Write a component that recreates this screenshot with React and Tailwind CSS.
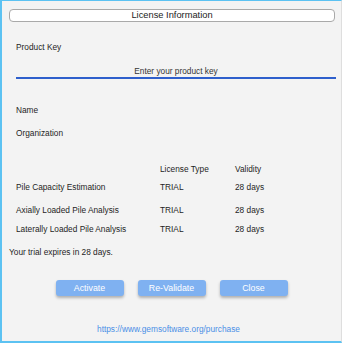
import React from 'react';

const rows = [
  ['Pile Capacity Estimation', 'TRIAL', '28 days', 'mt-[9px]'],
  ['Axially Loaded Pile Analysis', 'TRIAL', '28 days', 'mt-[14px]'],
  ['Laterally Loaded Pile Analysis', 'TRIAL', '28 days', 'mt-[10px]'],
];

const Btn = ({ children }) => (
  <button className="w-[68px] h-[16px] rounded-[3px] bg-[#7fb1f1] text-white text-[8.8px] leading-none shadow-[0_2px_3px_rgba(0,0,0,0.28)]">
    {children}
  </button>
);

const Row = ({ a, b, c, className = '' }) => (
  <div className={`ml-[14px] flex ${className}`}>
    <div className="w-[144px]">{a}</div>
    <div className="w-[75px]">{b}</div>
    <div>{c}</div>
  </div>
);

export default function App() {
  return (
    <div
      className="w-[342px] h-[343px] bg-[#f3f3f3] text-[#1e1e1e] text-[8.3px] leading-[9px] border-l-2 border-t border-b-2 border-r border-l-[#5cc2f2] border-t-[#5cc2f2] border-b-[#5cc2f2] border-r-[#dedede] flex flex-col"
      style={{ fontFamily: '"Liberation Sans", Arial, sans-serif' }}
    >
      {/* title */}
      <div className="mt-[8px] ml-[7px] w-[326px] h-[13px] bg-white border border-[#a9a9a9] rounded-[4px] flex items-center justify-center text-[9.3px] text-[#222]">
        License Information
      </div>

      <div className="ml-[14px] mt-[21px]">Product Key</div>

      {/* product key input */}
      <div className="ml-[14px] mt-[15px] w-[320px] border-b-2 border-[#2e5fcc] text-center pb-[1px] text-[#333]">
        Enter your product key
      </div>

      <div className="ml-[14px] mt-[27px]">Name</div>
      <div className="ml-[14px] mt-[14px]">Organization</div>

      <Row a="" b="License Type" c="Validity" className="mt-[27px]" />
      {rows.map((r, i) => (
        <Row key={i} a={r[0]} b={r[1]} c={r[2]} className={r[3]} />
      ))}

      <div className="ml-[7px] mt-[14px]">Your trial expires in 28 days.</div>

      <div className="mt-[23px] flex justify-center gap-[14px]">
        <Btn>Activate</Btn>
        <Btn>Re-Validate</Btn>
        <Btn>Close</Btn>
      </div>

      <div className="mt-[29px] text-center text-[#4a8fe6] pr-[6px]">
        https://www.gemsoftware.org/purchase
      </div>
    </div>
  );
}
